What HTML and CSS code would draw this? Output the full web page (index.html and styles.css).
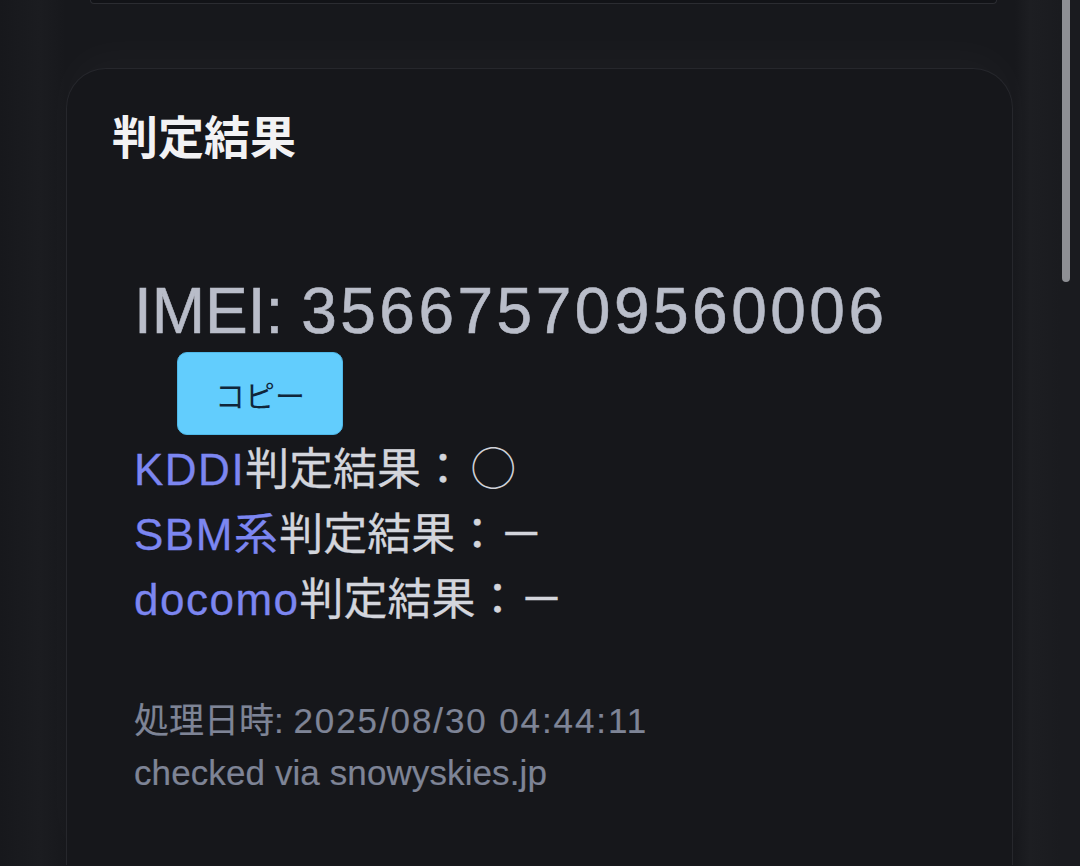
FILE: index.html
```html
<!DOCTYPE html>
<html lang="ja">
<head>
<meta charset="utf-8">
<title>判定結果</title>
<link rel="stylesheet" href="styles.css">
</head>
<body>
<div class="page">
  <div class="prev-card"></div>
  <section class="card">
    <h2 class="card-title">判定結果</h2>
    <div class="result">
      <div class="imei">IMEI: <span class="num">356675709560006</span></div>
      <button class="copy-btn" type="button">コピー</button>
      <ul class="carriers">
        <li><span class="carrier">KDDI</span>判定結果：<span class="mark">○</span></li>
        <li><span class="carrier">SBM系</span>判定結果：－</li>
        <li><span class="carrier">docomo</span>判定結果：－</li>
      </ul>
      <div class="meta">
        <div>処理日時: <span class="num-sm">2025/08/30 04:44:11</span></div>
        <div class="via">checked via snowyskies.jp</div>
      </div>
    </div>
  </section>
</div>
<div class="scrollbar"></div>
</body>
</html>
```
FILE: styles.css
```css
html, body {
  margin: 0;
  padding: 0;
  height: 100%;
  overflow: hidden;
}
body {
  background: #17181c;
  font-family: "Liberation Sans", "Noto Sans CJK JP", sans-serif;
  color: #d6d8df;
}
.page {
  position: relative;
  height: 866px;
  background: linear-gradient(90deg, #17181c 0px, #1b1c20 40px, #17181c 66px, #17181c 1015px, #1d1e22 1030px, #1a1b1f 1060px);
}
.prev-card {
  margin: 0 83px 0 90px;
  height: 3px;
  background: #121317;
  border: 1px solid #2b2c31;
  border-top: none;
  border-radius: 0 0 14px 14px;
  box-shadow: 0 10px 40px rgba(255, 255, 255, 0.035);
}
.card {
  margin: 64px 0 0 66px;
  width: 947px;
  height: 797px;
  background: #16171b;
  border: 1px solid #26272c;
  border-bottom: none;
  border-radius: 40px 40px 0 0;
  padding: 38px 0 0 45px;
  box-sizing: border-box;
  box-shadow: 0 -18px 40px rgba(255, 255, 255, 0.025);
}
.card-title {
  margin: 0;
  font-size: 46px;
  line-height: 54px;
  font-weight: 700;
  color: #f2f2f4;
  font-family: "Noto Sans CJK JP", sans-serif;
}
.result {
  padding: 113px 0 0 22px;
}
.imei {
  font-size: 64px;
  line-height: 74px;
  color: #b9bdc9;
  -webkit-text-stroke: 0.6px #b9bdc9;
}
.num {
  letter-spacing: 3.5px;
}
.copy-btn {
  display: block;
  margin: 4px 0 0 43px;
  width: 166px;
  height: 83px;
  background: #62cdfd;
  border: 1px solid #4fb8e8;
  border-radius: 10px;
  font-family: "Noto Sans CJK JP", sans-serif;
  font-size: 30px;
  color: #10263a;
  padding: 0;
}
.carriers {
  list-style: none;
  margin: 2px 0 0;
  padding: 0;
  font-size: 44px;
  line-height: 65px;
  color: #d3d5dc;
  -webkit-text-stroke: 0.3px #d3d5dc;
}
.carrier {
  color: #7c86f1;
  letter-spacing: 1.5px;
  -webkit-text-stroke: 0.3px #7c86f1;
}
.mark {
  font-family: "Noto Sans CJK JP", sans-serif;
  font-weight: 300;
  line-height: 1;
  margin-left: 5px;
  font-size: 46px;
  -webkit-text-stroke: 0;
  color: #cfd1d8;
}
.meta {
  margin-top: 63px;
  font-size: 35px;
  line-height: 52px;
  color: #7e8496;
  -webkit-text-stroke: 0.2px #7e8496;
}
.num-sm {
  letter-spacing: 1.9px;
}
.via {
  letter-spacing: 0.1px;
}
.scrollbar {
  position: absolute;
  top: 0;
  left: 1062px;
  width: 8px;
  height: 282px;
  border-radius: 0 0 4px 4px;
  background: #8e8f94;
}
```
